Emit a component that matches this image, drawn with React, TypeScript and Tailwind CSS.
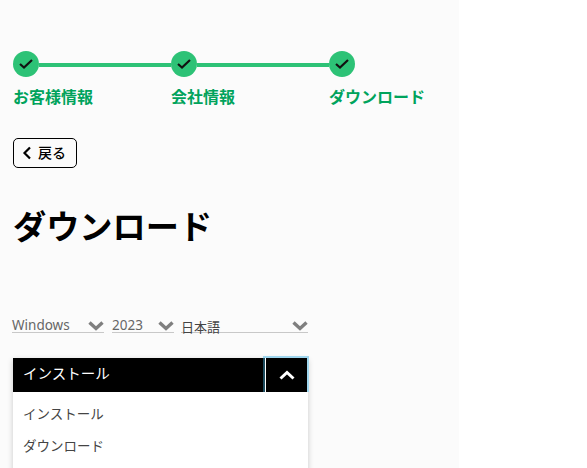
const jp = "font-['Liberation_Sans','Noto_Sans_CJK_JP',sans-serif]";

function Check() {
  return (
    <svg width="14" height="12" viewBox="0 0 14 12" fill="none" stroke="#111" strokeWidth="2.2">
      <path d="M1 6 L5 9.5 L13 2" />
    </svg>
  );
}

function Chevron({ up = false, color = "#7f7f7f", w = 16, h = 10, sw = 3.4, cls = "" }: { up?: boolean; color?: string; w?: number; h?: number; sw?: number; cls?: string }) {
  return (
    <svg className={cls} width={w} height={h} viewBox="0 0 16 10" fill="none" stroke={color} strokeWidth={sw}>
      <path d={up ? "M1.5 8.5 L8 2.5 L14.5 8.5" : "M1.5 1.5 L8 7.5 L14.5 1.5"} />
    </svg>
  );
}

function Step({ label, line = true, cls }: { label: string; line?: boolean; cls: string }) {
  return (
    <div className={cls}>
      <div className="flex items-center h-[26px]">
        <div className="w-[26px] h-[26px] rounded-full bg-[#2dc276] flex items-center justify-center shrink-0">
          <Check />
        </div>
        {line && <div className="flex-1 h-[4px] bg-[#2dc276] mt-[2px]" />}
      </div>
      <div className="mt-[9px] text-[16px] leading-[24px] font-bold text-[#00a35c] whitespace-nowrap">{label}</div>
    </div>
  );
}

export default function App() {
  return (
    <div className={`${jp} w-[587px] h-[468px] bg-white overflow-hidden`}>
      <div className="w-[459px] h-[468px] bg-[#fbfbfb] pl-[13px] pt-[51px] overflow-hidden">
        <div className="flex">
          <Step label="お客様情報" cls="w-[158px]" />
          <Step label="会社情報" cls="w-[158px]" />
          <Step label="ダウンロード" line={false} cls="w-[100px]" />
        </div>
        <button className="mt-[28px] w-[64px] h-[30px] border border-black rounded-[5px] flex items-center pl-[8px] gap-[6px] text-[14px] text-black font-medium">
          <svg width="10" height="14" viewBox="0 0 10 14" fill="none" stroke="#000" strokeWidth="2.2">
            <path d="M8 1.5 L2.5 7 L8 12.5" />
          </svg>
          <span>戻る</span>
        </button>
        <h1 className="mt-[38px] text-[33.2px] leading-[44px] font-bold text-black">ダウンロード</h1>
        <div className="mt-[63px] -ml-[1px] flex items-end text-[#666] text-[13.5px] leading-[20px] h-[20px] font-['Noto_Sans','Noto_Sans_CJK_JP',sans-serif]">
          <div className="w-[92px] h-[20px] border-b border-[#c8c8c8] flex items-center justify-between">
            <span className="mt-[4px]">Windows</span>
            <Chevron cls="mt-[6px]" />
          </div>
          <div className="ml-[8px] w-[62px] h-[20px] border-b border-[#c8c8c8] flex items-center justify-between">
            <span className="mt-[4px]">2023</span>
            <Chevron cls="mt-[6px]" />
          </div>
          <div className="ml-[7px] w-[127px] h-[20px] border-b border-[#c8c8c8] flex items-center justify-between">
            <span className="text-[#444] text-[13px] mt-[8px]">日本語</span>
            <Chevron cls="mt-[6px]" />
          </div>
        </div>
        <div className="mt-[25px] w-[295px] h-[140px] shadow-[0_2px_6px_rgba(0,0,0,0.2)] bg-white">
          <div className="h-[34px] bg-black flex items-center justify-between text-white text-[14.5px]">
            <span className="pl-[10px]">インストール</span>
            <div className="w-[42px] mr-[1px] h-[34px] flex items-center justify-center border-l border-white shadow-[0_-2px_0_#9fd6ee,2px_0_0_#9fd6ee,-2px_0_0_#1d4d5f,2px_-2px_0_#9fd6ee,-2px_-2px_0_#9fd6ee]">
              <Chevron up color="#fff" sw={3} />
            </div>
          </div>
          <div className="pt-[7px] pl-[10px] text-[#444] text-[13.5px] leading-[32px]">
            <div>インストール</div>
            <div>ダウンロード</div>
          </div>
        </div>
      </div>
    </div>
  );
}
